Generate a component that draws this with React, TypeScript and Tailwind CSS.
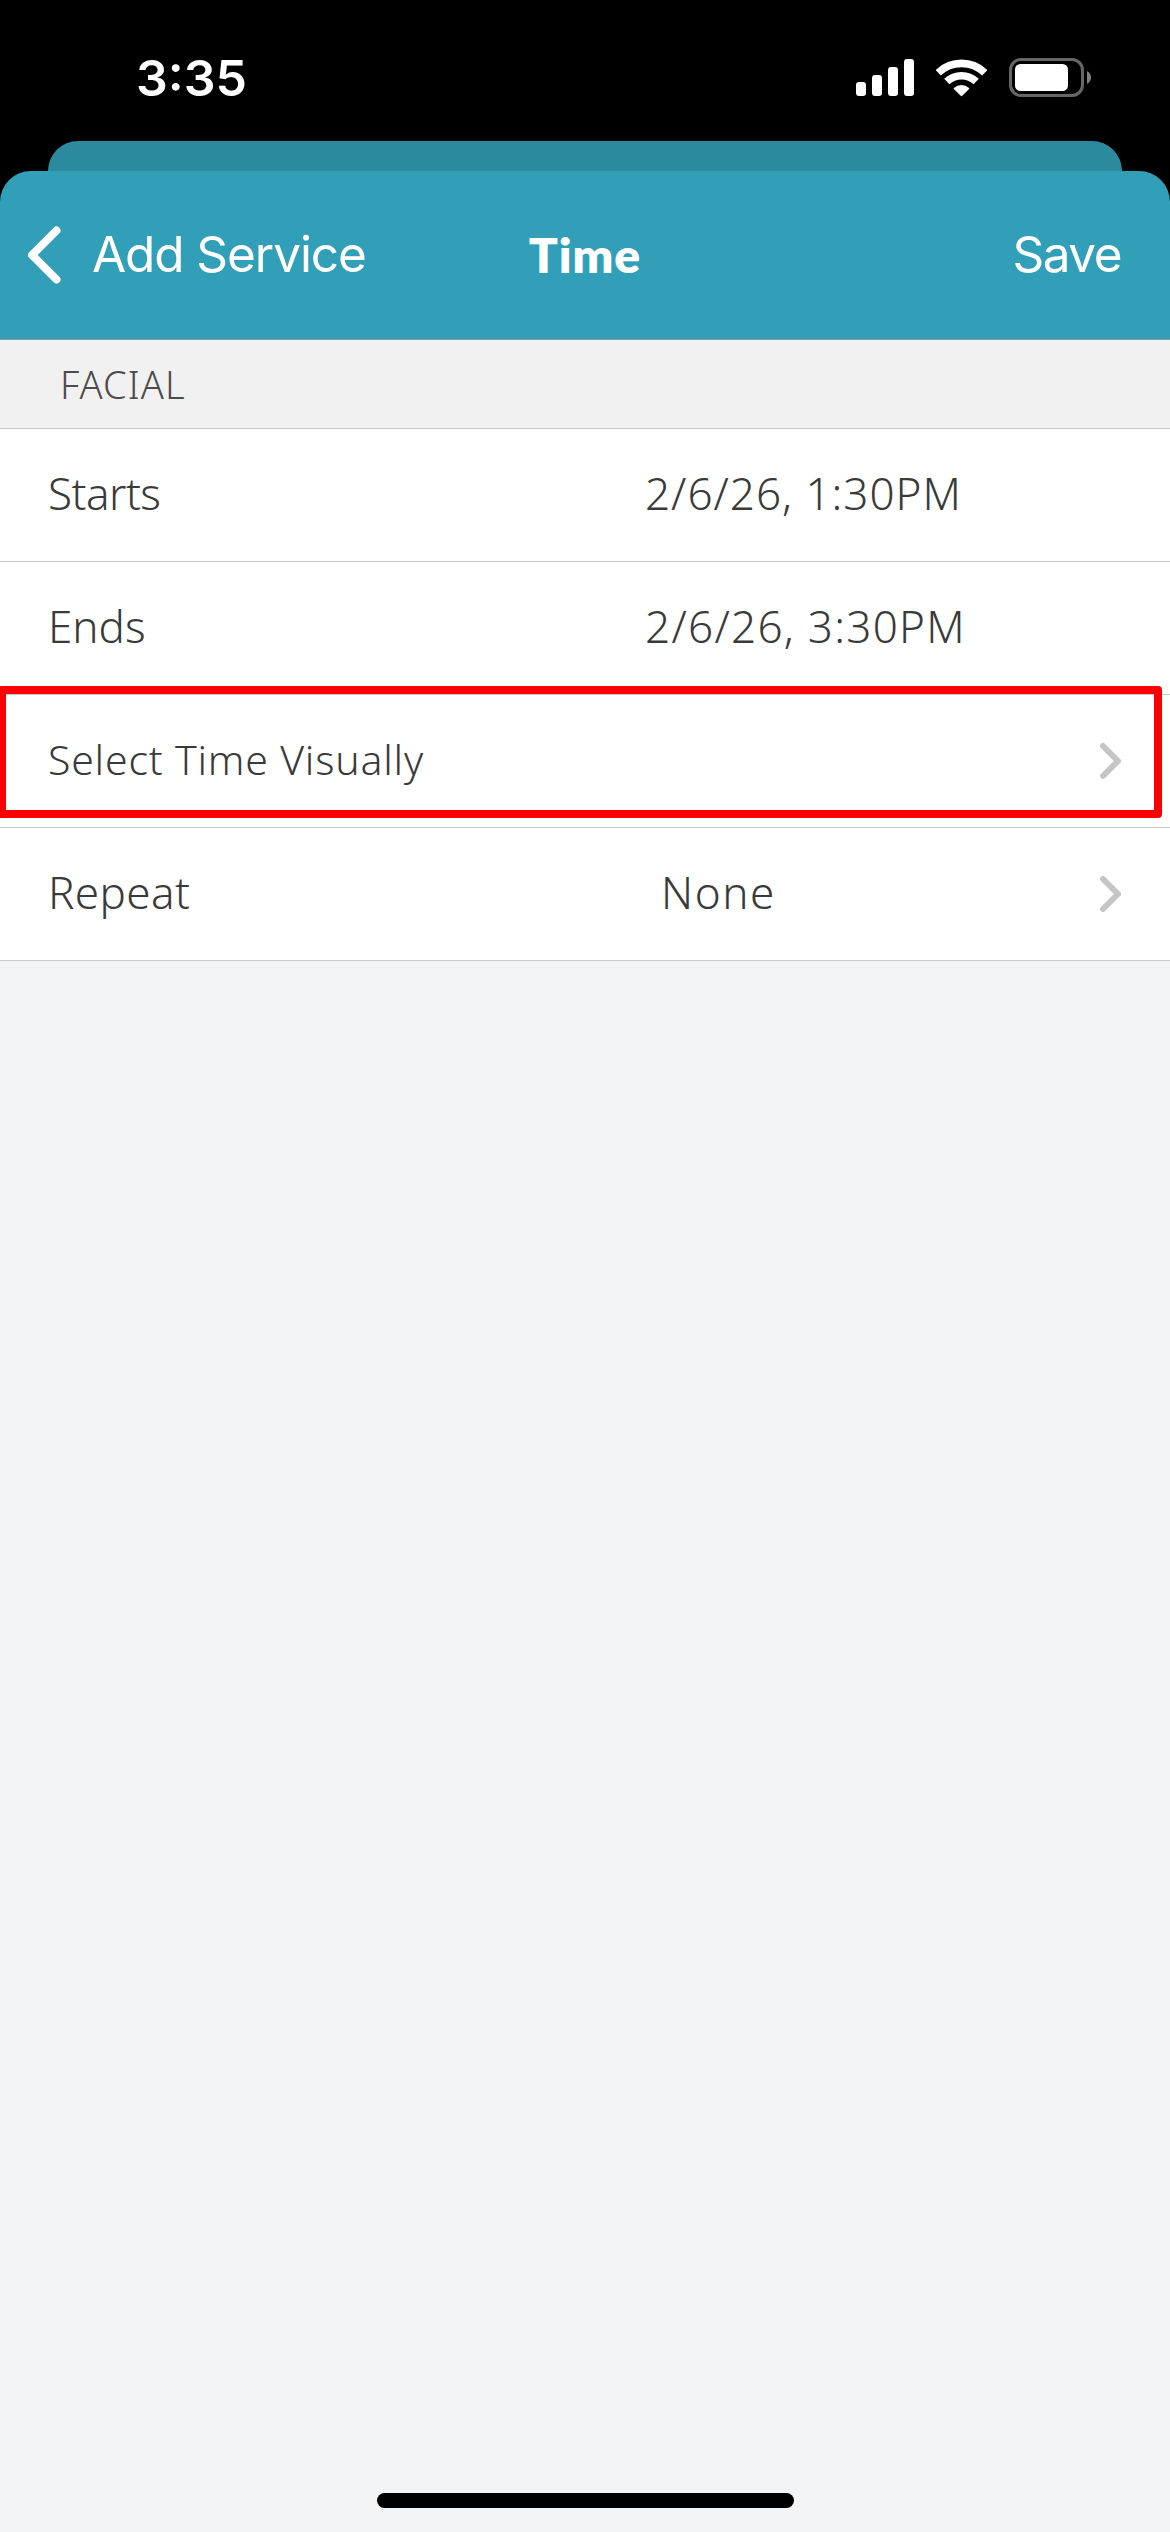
import clsx from "clsx";

type Row = {
  label: string;
  value?: string;
  labelClass: string;
  valueClass?: string;
  chevron?: boolean;
  highlighted?: boolean;
};

const rows: Row[] = [
  {
    label: "Starts",
    value: "2/6/26, 1:30PM",
    labelClass: "text-[44px] tracking-[-0.5px]",
    valueClass: "ml-[645px] tracking-[1px]",
  },
  {
    label: "Ends",
    value: "2/6/26, 3:30PM",
    labelClass: "text-[44px]",
    valueClass: "ml-[645px] tracking-[1.3px]",
  },
  {
    label: "Select Time Visually",
    labelClass: "text-[41px] tracking-[0.8px]",
    chevron: true,
    highlighted: true,
  },
  {
    label: "Repeat",
    value: "None",
    labelClass: "text-[44px] tracking-[0.4px]",
    valueClass: "ml-[661px] tracking-[1.6px]",
    chevron: true,
  },
];

function SignalIcon() {
  return (
    <svg width="58" height="37" viewBox="0 0 58 37" fill="#fff">
      <rect x="0" y="23" width="10" height="14" rx="3" />
      <rect x="16" y="16" width="10" height="21" rx="3" />
      <rect x="32" y="8" width="10" height="29" rx="3" />
      <rect x="48" y="0" width="10" height="37" rx="3" />
    </svg>
  );
}

function WifiIcon() {
  return (
    <svg width="51" height="38" viewBox="0 0 51 38" fill="none" stroke="#fff" strokeWidth="7.6">
      <path d="M2.2 13.8 A33.4 33.4 0 0 1 48.8 13.8" />
      <path d="M10.8 22.6 A21.2 21.2 0 0 1 40.2 22.6" />
      <path d="M25.5 36.6 L18.4 29.4 A10.5 10.5 0 0 1 32.6 29.4 Z" fill="#fff" strokeWidth="1.4" strokeLinejoin="round" />
    </svg>
  );
}

function BatteryIcon() {
  return (
    <svg width="82" height="39" viewBox="0 0 82 39" fill="none">
      <rect x="1.5" y="1.5" width="72" height="36" rx="10.5" stroke="#666" strokeWidth="3" />
      <rect x="6" y="6" width="53" height="27" rx="5.5" fill="#fff" />
      <path d="M78 13 C80.6 14.3 82 16.7 82 19.5 C82 22.3 80.6 24.7 78 26 Z" fill="#808080" />
    </svg>
  );
}

function BackIcon() {
  return (
    <svg width="34" height="58" viewBox="0 0 34 58" fill="none" stroke="#fff" strokeWidth="8" strokeLinecap="round" strokeLinejoin="round">
      <path d="M29.5 4.5 L5 29 L29.5 53.5" />
    </svg>
  );
}

function ChevronIcon() {
  return (
    <svg width="22" height="38" viewBox="0 0 22 38" fill="none" stroke="#c5c5c7" strokeWidth="6" strokeLinecap="round" strokeLinejoin="round">
      <path d="M4 4 L19 19 L4 34" />
    </svg>
  );
}

function StatusBar() {
  return (
    <div className="flex h-[141px] items-start justify-between pr-[79px] pl-[136px]">
      <span className="mt-[53px] text-[50px] leading-[50px] font-semibold text-white">3:35</span>
      <div className="mt-[58px] flex items-center">
        <SignalIcon />
        <div className="ml-[22px]">
          <WifiIcon />
        </div>
        <div className="ml-[22px]">
          <BatteryIcon />
        </div>
      </div>
    </div>
  );
}

function NavBar() {
  return (
    <header className="grid h-[169px] grid-cols-[1fr_auto_1fr] items-center rounded-t-[31px] border-b border-[#87999e] bg-[#319fb7] text-[49.5px] leading-none text-white">
      <button className="flex items-center justify-self-start pl-[27px] tracking-[-1.08px]">
        <BackIcon />
        <span className="ml-[31px]">Add Service</span>
      </button>
      <h1 className="font-['Lato',sans-serif] text-[48px] font-extrabold tracking-[1px]">Time</h1>
      <button className="justify-self-end pr-[49px] tracking-[-1.5px]">Save</button>
    </header>
  );
}

function SettingRow({ label, value, labelClass, valueClass, chevron, highlighted }: Row) {
  return (
    <li className="relative grid h-[133px] items-center border-b border-[#c8c8ca] bg-white leading-none">
      <span className={clsx("col-start-1 row-start-1 ml-12 pb-1", labelClass)}>{label}</span>
      {value && (
        <span className={clsx("col-start-1 row-start-1 pb-1 text-[44px]", valueClass)}>{value}</span>
      )}
      {chevron && (
        <span className="col-start-1 row-start-1 mr-[49px] justify-self-end">
          <ChevronIcon />
        </span>
      )}
      {highlighted && (
        <span className="absolute -top-[9px] -left-[2px] h-[132px] w-[1164px] rounded-[4px] border-8 border-[#ff0000]" />
      )}
    </li>
  );
}

export default function App() {
  return (
    <div className="flex h-[2532px] w-[1170px] flex-col overflow-hidden bg-black font-['Inter',sans-serif]">
      <StatusBar />
      {/* Top edge of the sheet underneath */}
      <div className="mx-12 h-[30px] rounded-t-[30px] bg-[#2c8a9f]" />
      <NavBar />

      <main className="flex flex-1 flex-col bg-[#f3f4f6] font-['Noto_Sans',sans-serif] font-light text-[#3a3a3a]">
        <h2 className="flex h-[89px] items-center border-b border-[#c8c8ca] bg-[#f1f1f1] pl-[60px] text-[38px] leading-none tracking-[1.1px] text-[#4c4c4c]">
          FACIAL
        </h2>
        <ul>
          {rows.map((row) => (
            <SettingRow key={row.label} {...row} />
          ))}
        </ul>

        {/* Home indicator */}
        <div className="mt-auto mb-6 ml-[377px] h-[15px] w-[417px] rounded-full bg-black" />
      </main>
    </div>
  );
}
